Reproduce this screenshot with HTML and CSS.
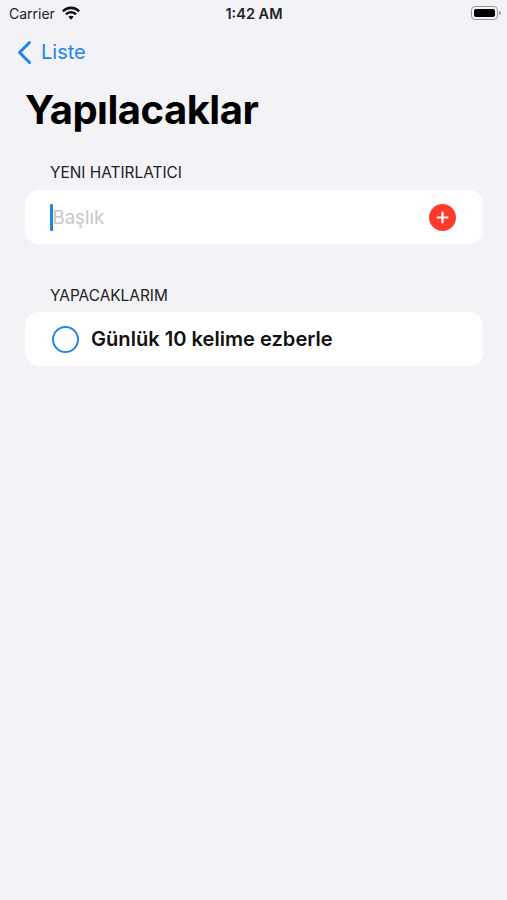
FILE: index.html
```html
<!DOCTYPE html>
<html>
  <head>
    <title>Yapılacaklar</title>
    <link rel="stylesheet" href="styles.css">
  </head>
  <body>
    <div class="status-bar">
      <div class="status-left">
        <span class="carrier">Carrier</span>
        <svg class="wifi" width="20" height="15" viewBox="0 0 20 15">
          <path d="M10 3.2c2.8 0 5.4 1.1 7.3 3l1.7-1.8C16.600 2 13.400.6 10 .6S3.400 2 1 4.400l1.700 1.800c1.900-1.900 4.500-3 7.300-3z" fill="#111"/>
          <path d="M10 7.600c1.600 0 3.100.6 4.200 1.700l1.700-1.800C14.300 6 12.200 5.100 10 5.100S5.700 6 4.100 7.500l1.700 1.800C6.900 8.200 8.400 7.600 10 7.600z" fill="#111"/>
          <path d="M10 9.700c-1 0-2 .4-2.700 1.100L10 13.700l2.700-2.900c-.7-.7-1.700-1.100-2.700-1.100z" fill="#111"/>
        </svg>
      </div>
      <span class="clock">1:42 AM</span>
      <div class="battery">
        <div class="battery-body"><div class="battery-fill"></div></div>
        <div class="battery-cap"></div>
      </div>
    </div>

    <div class="nav-bar">
      <svg class="back-icon" width="16" height="25" viewBox="0 0 16 25">
        <path d="M13.500 2.500L3.500 12.500l10 10" fill="none" stroke="#1c86ee" stroke-width="3" stroke-linecap="round" stroke-linejoin="round"/>
      </svg>
      <span class="back-label">Liste</span>
    </div>

    <h1 class="page-title">Yapılacaklar</h1>

    <h5 class="section-title">YENI HATIRLATICI</h5>
    <div class="card input-card">
      <div class="caret"></div>
      <span class="placeholder">Başlık</span>
      <svg class="add-icon" width="27" height="27" viewBox="0 0 27 27">
        <circle cx="13.500" cy="13.500" r="13.500" fill="#ff3b30"/>
        <path d="M13.500 8.500v10M8.500 13.500h10" stroke="#fff" stroke-width="2.200" stroke-linecap="round"/>
      </svg>
    </div>

    <h5 class="section-title second">YAPACAKLARIM</h5>
    <div class="card todo-card">
      <div class="todo-circle"></div>
      <span class="todo-text">Günlük 10 kelime ezberle</span>
    </div>
  </body>
</html>
```

FILE: styles.css
```css
body{
  margin: 0;
  height: 900px;
  overflow: hidden;
  background: #f2f2f7;
  color: #000;
  font-family: "Inter", "Liberation Sans", sans-serif;
}

/**** status bar ****/
.status-bar{
  display: flex;
  align-items: center;
  justify-content: space-between;
  height: 26px;
  margin-bottom: 2px;
  padding: 0 6px 0 9px;
}
.status-left{
  display: flex;
  align-items: center;
  gap: 6px;
  width: 150px;
}
.carrier{
  font-size: 14px;
  color: #222;
}
.clock{
  margin-left: -2px;
  font-size: 14.500px;
  font-weight: 600;
  color: #222;
}
.battery{
  display: flex;
  align-items: center;
  justify-content: flex-end;
  width: 150px;
}
.battery-body{
  width: 27px;
  height: 14px;
  padding: 2px;
  box-sizing: border-box;
  border: 1px solid #999;
  border-radius: 4px;
}
.battery-fill{
  height: 100%;
  background: #000;
  border-radius: 2px;
}
.battery-cap{
  width: 2px;
  height: 4px;
  margin-left: 1px;
  background: #999;
  border-radius: 0 2px 2px 0;
}

/**** nav ****/
.nav-bar{
  display: flex;
  align-items: center;
  gap: 9px;
  height: 26px;
  margin-top: 13px;
  padding-left: 16px;
}
.back-label{
  font-size: 20px;
  color: #1c86ee;
}

.page-title{
  margin: 22px 0 0 25px;
  font-size: 40px;
  line-height: 46px;
  font-weight: 700;
  letter-spacing: -0.5px;
}

/**** sections ****/
.section-title{
  margin: 30px 0 0 50px;
  font-size: 15.400px;
  line-height: 20px;
  font-weight: 400;
  color: #222;
}
.section-title.second{
  margin-top: 42px;
}
.card{
  display: flex;
  align-items: center;
  margin: 7px 24px 0 25px;
  height: 54px;
  background: #fff;
  border-radius: 14px;
}
.section-title.second + .card{
  margin-top: 6px;
}
.input-card{
  padding: 0 27px 0 25px;
}
.caret{
  width: 2.500px;
  height: 27px;
  background: #1c86ee;
  border-radius: 1px;
}
.placeholder{
  flex: 1;
  font-size: 18.600px;
  color: #c7c7cc;
}
.todo-card{
  padding-left: 27px;
}
.todo-circle{
  width: 23px;
  height: 23px;
  border: 2px solid #1c86ee;
  border-radius: 50%;
}
.todo-text{
  margin-left: 12px;
  font-size: 20.100px;
  font-weight: 600;
  color: #111;
}
```
